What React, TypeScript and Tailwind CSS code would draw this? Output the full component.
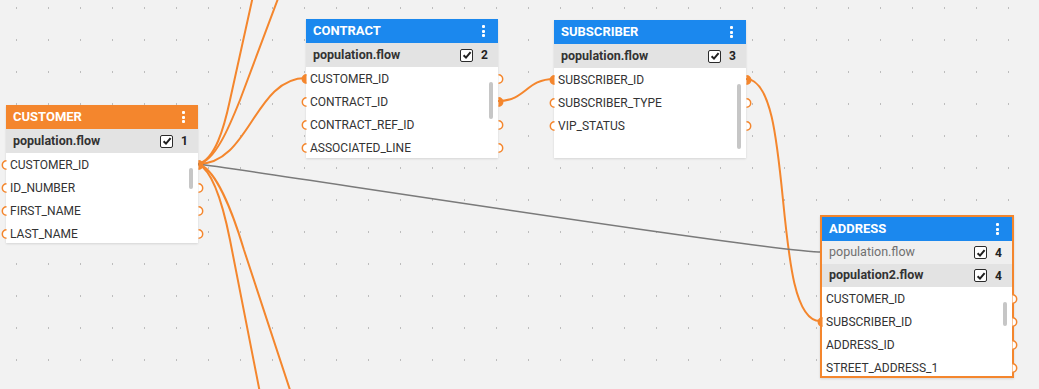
const ORANGE = "#f4862d";

type Port = "filled" | "empty" | undefined;
type Row = { name: string; l?: Port; r?: Port };
type Flow = { name: string; count: number; dim?: boolean };

type NodeProps = {
  x: number;
  y: number;
  title: string;
  head: string;
  flows: Flow[];
  rows: Row[];
  rowsH: number;
  thumb: { top: number; h: number };
  selected?: boolean;
};

const customerRows: Row[] = [
  { name: "CUSTOMER_ID", l: "empty", r: "filled" },
  { name: "ID_NUMBER", l: "empty", r: "empty" },
  { name: "FIRST_NAME", l: "empty", r: "empty" },
  { name: "LAST_NAME", l: "empty", r: "empty" },
];

const contractRows: Row[] = [
  { name: "CUSTOMER_ID", l: "filled", r: "empty" },
  { name: "CONTRACT_ID", l: "empty", r: "filled" },
  { name: "CONTRACT_REF_ID", l: "empty", r: "empty" },
  { name: "ASSOCIATED_LINE", l: "empty", r: "empty" },
];

const subscriberRows: Row[] = [
  { name: "SUBSCRIBER_ID", l: "filled", r: "filled" },
  { name: "SUBSCRIBER_TYPE", l: "empty", r: "empty" },
  { name: "VIP_STATUS", l: "empty", r: "empty" },
];

const addressRows: Row[] = [
  { name: "CUSTOMER_ID", r: "empty" },
  { name: "SUBSCRIBER_ID", l: "filled", r: "empty" },
  { name: "ADDRESS_ID", r: "empty" },
  { name: "STREET_ADDRESS_1", r: "empty" },
];

function PortDot({ kind, side }: { kind: Port; side: "l" | "r" }) {
  if (!kind) return null;
  const d = side === "l" ? "M5.5 0.8 A4.2 4.2 0 0 0 5.5 9.2" : "M0.5 0.8 A4.2 4.2 0 0 1 0.5 9.2";
  return (
    <svg
      viewBox="0 0 6 10"
      className={`absolute w-[6px] h-[10px] ${side === "l" ? "-left-[5.5px]" : "-right-[5.5px]"}`}
    >
      <path d={d} fill={kind === "filled" ? ORANGE : "#fff"} stroke={ORANGE} strokeWidth="1.5" />
    </svg>
  );
}

function Check() {
  return (
    <span className="w-[13px] h-[13px] border-[1.5px] border-[#2b2b2b] rounded-[2px] flex items-center justify-center bg-white">
      <svg viewBox="0 0 10 10" className="w-[10px] h-[10px]">
        <path d="M1.6 5.2 L4 7.6 L8.6 2.2" fill="none" stroke="#1f1f1f" strokeWidth="2" />
      </svg>
    </span>
  );
}

function Node({ x, y, title, head, flows, rows, rowsH, thumb, selected }: NodeProps) {
  return (
    <div
      className={`absolute flex flex-col bg-white shadow-[0_1px_2px_rgba(0,0,0,0.12)] ${
        selected ? "w-[194px] border-2 border-[#f4862d]" : "w-[192px]"
      }`}
      style={{ left: x, top: y }}
    >
      {/* header */}
      <div className="h-[24px] flex items-center justify-between pl-[7px] pr-[13px] text-white font-bold text-[13px]" style={{ background: head }}>
        <span>{title}</span>
        <span className="flex flex-col gap-[1.5px]">
          <span className="w-[3px] h-[3px] bg-white rounded-[1px]" />
          <span className="w-[3px] h-[3px] bg-white rounded-[1px]" />
          <span className="w-[3px] h-[3px] bg-white rounded-[1px]" />
        </span>
      </div>

      {/* flows */}
      {flows.map((f) => (
        <div
          key={f.name}
          className={`flex items-center justify-between pl-[7px] pr-[11px] ${
            selected ? "h-[23px]" : "h-[24px]"
          } ${f.dim ? "bg-[#efefef] text-[#707070] font-normal" : "bg-[#e3e3e3] text-[#333] font-bold"}`}
        >
          <span className="text-[12.5px]">{f.name}</span>
          <span className="flex items-center gap-[8px]">
            <Check />
            <span className="text-[12px] text-[#222] font-bold w-[6px]">{f.count}</span>
          </span>
        </div>
      ))}

      {/* attributes */}
      <div className="relative">
        <div className="overflow-hidden" style={{ height: rowsH }}>
          {rows.map((r) => (
            <div key={r.name} className="h-[23px] flex items-center pl-[4px] text-[12px] text-[#333]">
              {r.name}
            </div>
          ))}
        </div>
        <span
          className="absolute right-[5px] w-[4px] rounded-full bg-[#c6c6c6]"
          style={{ top: thumb.top, height: thumb.h }}
        />
        {rows.map((r, i) => (
          <div key={r.name} className="absolute left-0 right-0 h-[10px] flex items-center" style={{ top: i * 23 + 6.5 }}>
            <PortDot kind={r.l} side="l" />
            <PortDot kind={r.r} side="r" />
          </div>
        ))}
      </div>
    </div>
  );
}

function Links() {
  return (
    <svg className="absolute inset-0" width="1039" height="389" viewBox="0 0 1039 389">
      <defs>
        <pattern id="grid" x="16" y="7" width="32" height="32" patternUnits="userSpaceOnUse">
          <rect x="0" y="0" width="1" height="2" fill="#bdbdbd" />
        </pattern>
      </defs>
      <rect width="1039" height="389" fill="url(#grid)" />
      <g fill="none" stroke={ORANGE} strokeWidth="2">
        <path d="M198 164 C 215 160, 224 128, 230 100 L 253 -4" />
        <path d="M198 164 C 215 162, 230 125, 240 100 L 279 -4" />
        <path d="M198 164 C 250 164, 254 78, 306 78" />
        <path d="M198 164 C 212 170, 222 200, 230 240 L 260 393" />
        <path d="M198 164 C 215 168, 232 210, 244 250 L 291 393" />
        <path d="M498 101 C 526 101, 526 79, 554 79" />
        <path d="M746 79 C 796 79, 770 321, 820 321" />
      </g>
      <path d="M198 164 C 248 170, 772 252, 822 252" fill="none" stroke="#7a7a7a" strokeWidth="1.5" />
    </svg>
  );
}

export default function App() {
  return (
    <div className="relative w-[1039px] h-[389px] overflow-hidden bg-[#f2f2f2] font-['Roboto',sans-serif]">
      <Links />

      <Node
        x={6}
        y={105}
        title="CUSTOMER"
        head="#f4862d"
        flows={[{ name: "population.flow", count: 1 }]}
        rows={customerRows}
        rowsH={90}
        thumb={{ top: 15, h: 21 }}
      />
      <Node
        x={306}
        y={19}
        title="CONTRACT"
        head="#1b88ee"
        flows={[{ name: "population.flow", count: 2 }]}
        rows={contractRows}
        rowsH={91}
        thumb={{ top: 15, h: 37 }}
      />
      <Node
        x={554}
        y={20}
        title="SUBSCRIBER"
        head="#1b88ee"
        flows={[{ name: "population.flow", count: 3 }]}
        rows={subscriberRows}
        rowsH={90}
        thumb={{ top: 16, h: 65 }}
      />
      <Node
        x={820}
        y={215}
        title="ADDRESS"
        head="#1b88ee"
        flows={[
          { name: "population.flow", count: 4, dim: true },
          { name: "population2.flow", count: 4 },
        ]}
        rows={addressRows}
        rowsH={89}
        thumb={{ top: 15, h: 24 }}
        selected
      />
    </div>
  );
}
